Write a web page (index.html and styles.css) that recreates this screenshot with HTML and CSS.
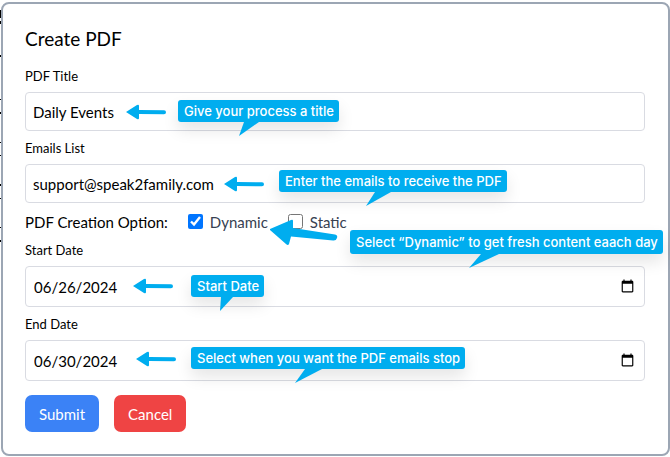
FILE: index.html
```
<!DOCTYPE html>
<html lang="en">
<head>
<meta charset="utf-8">
<title>Create PDF</title>
<link rel="stylesheet" href="styles.css">
</head>
<body>
<svg class="page-edge" width="2" height="260" aria-hidden="true"><path d="M0 10h1v8H0zM0 21h1v3H0zM0 55h1v2H0zM0 99h1v1H0zM0 112h1v2H0zM0 142h1v1H0zM0 155h1v1H0zM0 184h1v2H0zM0 198h1v1H0zM0 227h1v1H0zM0 240h1v2H0z"/></svg>
<main class="card">
  <h1 class="title">Create PDF</h1>
  <form class="form">
    <div class="field">
      <label class="label" for="pdf-title">PDF Title</label>
      <div class="control">
        <input class="input" id="pdf-title" type="text" value="Daily Events">
        <svg class="arrow arrow-title" width="42" height="16" viewBox="0 0 42 16" aria-hidden="true"><path d="M0 8 11 1q2-1 2 1v4l25 .3q2 0 2 2t-2 2l-25-.3V14q0 2-2 1z"/></svg>
        <div class="callout callout-title">Give your process a title<svg class="tail" width="20" height="14" viewBox="0 0 20 14" aria-hidden="true"><path d="M5 0h15L0 14z"/></svg></div>
      </div>
    </div>
    <div class="field">
      <label class="label" for="emails">Emails List</label>
      <div class="control">
        <input class="input" id="emails" type="text" value="support@speak2family.com">
        <svg class="arrow arrow-emails" width="42" height="16" viewBox="0 0 42 16" aria-hidden="true"><path d="M0 8 11 1q2-1 2 1v4l25 .3q2 0 2 2t-2 2l-25-.3V14q0 2-2 1z"/></svg>
        <div class="callout callout-emails">Enter the emails to receive the PDF<svg class="tail" width="25" height="14" viewBox="0 0 25 14" aria-hidden="true"><path d="M9 0h16L0 14z"/></svg></div>
      </div>
    </div>
    <div class="options" role="group" aria-labelledby="option-name">
      <span class="option-name" id="option-name">PDF Creation Option:</span>
      <label class="choice"><input class="check" type="checkbox" checked>Dynamic</label>
      <label class="choice"><input class="check" type="checkbox">Static</label>
      <svg class="arrow arrow-option" width="70" height="28" viewBox="0 0 70 28" aria-hidden="true"><path d="M1 10 22 1q2-1 2 1v7l42 6.500q3 .5 2 3.500-1 3-4 2.500L22 17.500 20 25q-1 2-3 0L1 11z"/></svg>
      <div class="callout callout-option">Select “Dynamic” to get fresh content eaach day<svg class="tail" width="30" height="14" viewBox="0 0 30 14" aria-hidden="true"><path d="M12 0h18L0 14z"/></svg></div>
    </div>
    <div class="field">
      <label class="label" for="start">Start Date</label>
      <div class="control">
        <input class="input date" id="start" type="date" value="2024-06-26">
        <svg class="arrow arrow-start" width="42" height="16" viewBox="0 0 42 16" aria-hidden="true"><path d="M0 8 11 1q2-1 2 1v4l25 .3q2 0 2 2t-2 2l-25-.3V14q0 2-2 1z"/></svg>
        <div class="callout callout-start">Start Date<svg class="tail" width="13" height="14" viewBox="0 0 13 14" aria-hidden="true"><path d="M1 0h12L0 14z"/></svg></div>
      </div>
    </div>
    <div class="field">
      <label class="label" for="end">End Date</label>
      <div class="control">
        <input class="input date" id="end" type="date" value="2024-06-30">
        <svg class="arrow arrow-end" width="42" height="16" viewBox="0 0 42 16" aria-hidden="true"><path d="M0 8 11 1q2-1 2 1v4l25 .3q2 0 2 2t-2 2l-25-.3V14q0 2-2 1z"/></svg>
        <div class="callout callout-end">Select when you want the PDF emails stop<svg class="tail" width="27" height="14" viewBox="0 0 27 14" aria-hidden="true"><path d="M10 0h17L0 14z"/></svg></div>
      </div>
    </div>
    <div class="actions">
      <button class="button submit" type="submit">Submit</button>
      <button class="button cancel" type="button">Cancel</button>
    </div>
  </form>
</main>
</body>
</html>
```
FILE: styles.css
```
* {
  box-sizing: border-box;
}

body {
  margin: 0;
  padding: 2px 0 0 1px;
  background: #fff;
  color: #000;
  font-family: Lato, sans-serif;
  font-weight: 400;
}

.page-edge {
  position: absolute;
  top: 0;
  left: 0;
}

.card {
  position: relative;
  padding: 21px 23px 22px 22px;
  border: 2px solid #9ca6b4;
  border-radius: 8px;
  background: #fff;
}

.title {
  margin: 0 0 13px;
  font-size: 19px;
  font-weight: 400;
  line-height: 28px;
}

.form {
  display: flex;
  flex-direction: column;
  gap: 7px;
}

.field {
  display: flex;
  flex-direction: column;
  gap: 6px;
}

.label {
  font-size: 13px;
  line-height: 20px;
}

.control,
.options {
  position: relative;
}

.input {
  display: block;
  width: 100%;
  height: 39px;
  padding: 0 7px;
  border: 1px solid #d9dbe2;
  border-radius: 4px;
  background: #fff;
  color: #000;
  font: inherit;
  font-size: 15px;
}

.date {
  height: 41px;
  padding-left: 8px;
}

.date::-webkit-datetime-edit-month-field,
.date::-webkit-datetime-edit-day-field,
.date::-webkit-datetime-edit-year-field {
  padding: 0;
}

.options {
  display: flex;
  align-items: center;
  height: 23px;
  gap: 20px;
  font-size: 15px;
}

.choice {
  display: flex;
  align-items: center;
  gap: 7px;
  color: #374151;
}

.check {
  width: 15px;
  height: 15px;
  margin: 0;
}

.arrow {
  position: absolute;
  fill: #00adef;
}

.callout {
  position: absolute;
  padding: 0 5px 0 6px;
  border-radius: 3px;
  background: #00adef;
  box-shadow: 0 8px 16px rgba(0, 0, 0, 0.1);
  color: #fff;
  font-family: Inter, sans-serif;
  font-size: 13px;
  font-weight: 500;
  line-height: 22px;
  white-space: nowrap;
}

.tail {
  position: absolute;
  top: 100%;
  fill: #00adef;
}

.arrow-title { top: 12px; left: 101px; }
.callout-title { top: 8px; left: 153px; }
.callout-title .tail { left: 61px; }

.arrow-emails { top: 12px; left: 199px; }
.callout-emails { top: 6px; left: 254px; }
.callout-emails .tail { left: 87px; }

.arrow-option { top: 9px; left: 244px; z-index: 1; }
.callout-option { top: 20px; left: 325px; z-index: 1; line-height: 24px; }
.callout-option .tail { left: 119px; }

.arrow-start { top: 12px; left: 108px; }
.callout-start { top: 9px; left: 166px; }
.callout-start .tail { left: 29px; }

.arrow-end { top: 11px; left: 111px; }
.callout-end { top: 7px; left: 166px; }
.callout-end .tail { left: 104px; }

.actions {
  display: flex;
  gap: 15px;
  padding-top: 7px;
}

.button {
  height: 37px;
  padding: 0 14px;
  border: 0;
  border-radius: 7px;
  color: #fff;
  font: inherit;
  font-size: 15px;
}

.submit {
  background: #3b82f6;
}

.cancel {
  background: #ef4444;
}
```
